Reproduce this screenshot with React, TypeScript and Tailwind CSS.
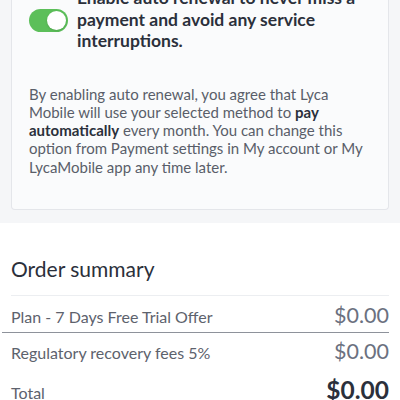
import { useState } from "react";

const font = { fontFamily: "Lato, 'Noto Sans', sans-serif" };

function Toggle({ on, onChange }: { on: boolean; onChange: (v: boolean) => void }) {
    return (
        <button
            type="button"
            onClick={() => onChange(!on)}
            className={`relative shrink-0 w-[39px] h-[23px] rounded-full ${on ? "bg-[#5cbf5a]" : "bg-gray-300"}`}
        >
            <span className={`absolute top-[2px] w-[19px] h-[19px] rounded-full bg-white shadow ${on ? "right-[2px]" : "left-[2px]"}`} />
        </button>
    );
}

function SummaryRow({ label, amount }: { label: string; amount: string }) {
    return (
        <div className="flex flex-row items-baseline justify-between">
            <span className="text-[16px] leading-[26px] text-[#5d626d]">{label}</span>
            <span className="text-[21.5px] leading-[26px] text-[#6b7180]">{amount}</span>
        </div>
    );
}

export default function App() {
    const [autoRenew, setAutoRenew] = useState(true);

    return (
        <div className="w-[400px] h-[400px] overflow-hidden bg-white" style={font}>
            <div className="bg-[#f5f6f8] px-[11px] pb-[13px]">
                <div className="-mt-[13px] bg-[#fafbfc] border border-t-0 border-[#e4e6ea] rounded-b-[4px] pl-[17px] pr-[12px] pb-[33px]">
                    <div className="flex flex-row items-start gap-[9px]">
                        <div className="pt-[22px]">
                            <Toggle on={autoRenew} onChange={setAutoRenew} />
                        </div>
                        <p className="text-[17.5px] leading-[21.5px] font-bold text-[#2b303b]">
                            Enable auto renewal to never miss a payment and avoid any service interruptions.
                        </p>
                    </div>
                    <p className="mt-[33px] text-[15px] leading-[18.33px] text-[#595e69]">
                        By enabling auto renewal, you agree that Lyca Mobile will use your selected method to{" "}
                        <b className="text-[#2b303b]">pay automatically</b> every month. You can change this option from
                        Payment settings in My account or My LycaMobile app any time later.
                    </p>
                </div>
            </div>

            <div className="px-[11px] pt-[34px]">
                <h2 className="text-[21px] leading-[24px] text-[#2b303b]">Order summary</h2>
                <div className="mt-[14px] border-t border-[#eceef1]" />
                <div className="pt-[6px]">
                    <SummaryRow label="Plan - 7 Days Free Trial Offer" amount="$0.00" />
                </div>
            </div>
            <div className="ml-[2px] mr-[11px] mt-[2px] border-t border-[#8e929b]" />
            <div className="px-[11px] pt-[5px]">
                <SummaryRow label="Regulatory recovery fees 5%" amount="$0.00" />
                <div className="mt-[10px] flex flex-row items-baseline justify-between">
                    <span className="text-[16px] leading-[28px] text-[#5d626d]">Total</span>
                    <span className="text-[24.5px] leading-[28px] font-bold text-[#2b303b]">$0.00</span>
                </div>
            </div>
        </div>
    );
}
